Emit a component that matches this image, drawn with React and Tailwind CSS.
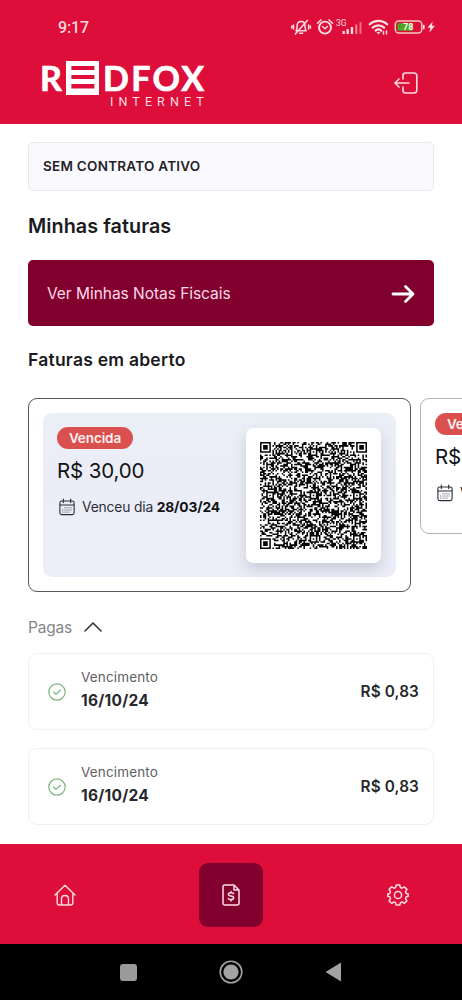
const QR_SIZE = 69;
const QR_MARKS = [6, 34, 62];

const isFinder = (x, y) => (x < 8 && y < 8) || (x > 60 && y < 8) || (x < 8 && y > 60);

const qrModule = (x, y) => {
  if (isFinder(x, y)) {
    const fx = x > 60 ? x - 62 : x;
    const fy = y > 60 ? y - 62 : y;
    if (fx < 0 || fy < 0 || fx > 6 || fy > 6) return false;
    return Math.max(Math.abs(fx - 3), Math.abs(fy - 3)) !== 2;
  }
  for (const cy of QR_MARKS) {
    for (const cx of QR_MARKS) {
      const d = Math.max(Math.abs(x - cx), Math.abs(y - cy));
      if (d <= 2 && !isFinder(cx, cy)) return d !== 1;
    }
  }
  if (x === 6 || y === 6) return (x + y) % 2 === 0;
  let h = (x * 374761393 + y * 668265263) | 0;
  h = Math.imul(h ^ (h >>> 13), 1274126177);
  return ((h ^ (h >>> 16)) & 255) < 134;
};

const buildQr = () => {
  let d = "";
  for (let y = 0; y < QR_SIZE; y++) {
    for (let x = 0; x < QR_SIZE; x++) {
      if (qrModule(x, y)) d += `M${x} ${y}h1v1h-1z`;
    }
  }
  return d;
};

const qrPath = buildQr();

const QrCode = () => (
  <svg viewBox={`0 0 ${QR_SIZE} ${QR_SIZE}`} className="h-[107px] w-[107px]">
    <path d={qrPath} fill="#050505" />
  </svg>
);

const CalendarIcon = () => (
  <svg viewBox="0 0 16 18" className="h-[18px] w-4 shrink-0" fill="none" stroke="#2b2d3a" strokeLinecap="round" strokeLinejoin="round">
    <rect x="0.9" y="3" width="14.2" height="13.6" rx="1.8" strokeWidth="1.1" />
    <path d="M1 7h14M4.3 1v3.6M11.7 1v3.6" strokeWidth="1.1" />
    <path d="M6 9.8h.1M8 9.8h.1M10 9.8h.1M12 9.8h.1M3.7 12h.1M6 12h.1M8 12h.1M10 12h.1M12 12h.1M3.7 14.1h.1M6 14.1h.1M8 14.1h.1M10 14.1h.1" strokeWidth="0.9" />
  </svg>
);

const CheckIcon = () => (
  <svg viewBox="0 0 18 18" className="h-[18px] w-[18px] shrink-0" fill="none" stroke="#7bb480" strokeWidth="1.2" strokeLinecap="round" strokeLinejoin="round">
    <circle cx="9" cy="9" r="8.2" />
    <path d="M5.7 9.2l2.3 2.2 4.3-4.2" />
  </svg>
);

const StatusBar = () => (
  <div className="flex h-[54px] items-center justify-between pr-[26px] pl-[58px]">
    <span className="pt-px font-[Roboto] text-base font-medium tracking-[-0.1px] text-[#ffd5da]">9:17</span>
    <svg viewBox="0 0 145 20" className="h-5 w-[145px]" fill="none" stroke="#ffe1e5" strokeWidth="1.5" strokeLinecap="round" strokeLinejoin="round">
      {/* muted bell */}
      <path d="M5 13.8c1.2-1.3 1-2.5 1.1-4.8 0-3 1.7-4.6 4-4.6s3.9 1.6 3.9 4.6c.1 2.3 0 3.5 1.2 4.8zM8.6 16.3h3M4.3 17L16.4 3.5M2.5 8v4M.8 9v2M17.6 8v4M19.4 9v2" />
      {/* alarm clock */}
      <circle cx="34" cy="10.6" r="6" strokeWidth="1.9" />
      <path d="M31.5 9.5L34 11.7l2.5-2.2M26.5 6.2L30 3M41.5 6.2L38 3" />
      {/* signal */}
      <text x="45" y="8.5" fontSize="8.5" fontFamily="Roboto" fill="#ffd5da" stroke="none">3G</text>
      <g stroke="none">
        <rect x="51.5" y="14" width="2.3" height="3" fill="#ffe1e5" />
        <rect x="55.5" y="12.2" width="2.3" height="4.8" fill="#ffe1e5" />
        <rect x="59.8" y="10" width="2.3" height="7" fill="#ffe1e5" />
        <rect x="64.3" y="7.5" width="2" height="9.5" fill="#f48095" />
        <rect x="68.5" y="5" width="2" height="12" fill="#f06c84" />
      </g>
      {/* wifi */}
      <path d="M78.7 7.3c5-4.6 12.5-4.6 17.4 0M81.6 10.6c3.3-3.1 8.400-3.100 11.600 0M84.600 13.600c1.700-1.600 4-1.600 5.600 0" strokeWidth="2.200" />
      <path d="M85.500 15h4l-2 2.400z" fill="#ffe1e5" stroke="none" />
      <path d="M92.500 14.500v2.500M95.500 14v3" />
      {/* battery */}
      <rect x="104.300" y="4" width="26.500" height="12" rx="3.400" stroke="#f5c6c0" strokeWidth="1.500" />
      <path d="M107.500 6.200h14v7.600h-14q-1 0-1-1V7.200q0-1 1-1z" fill="#4fa51d" stroke="none" />
      <text x="112" y="13.200" fontSize="9" fontWeight="700" fontFamily="Roboto" fill="#f4ffe8" stroke="none">78</text>
      <path d="M132.800 8.500v3" strokeWidth="1.700" />
      <path d="M141.700 4.500l-5.200 6.200h3l-1.200 5 5.600-6.900h-3z" fill="#ffe1e5" stroke="none" />
    </svg>
  </div>
);

const Logo = () => (
  <div className="w-[168px] font-[Lato] text-white">
    <div className="flex h-[34px] items-center">
      <span className="w-[26px] text-[34px] leading-[32px] font-bold [-webkit-text-stroke:0.7px_white]">R</span>
      <svg viewBox="0 0 33 34" className="mr-[4px] h-[34px] w-[33px]">
        <path fillRule="evenodd" fill="#fff" d="M0 0h33v34H0zM5.4 5h23v4H5.4zM5.4 14h23v4H5.4zM5.4 23h23v4.6H5.4z" />
      </svg>
      <span className="text-[34px] leading-[32px] font-bold tracking-[2.3px] [-webkit-text-stroke:0.7px_white]">DFOX</span>
    </div>
    <div className="pl-[70px] font-[Roboto] text-[12.5px] leading-[14px] tracking-[5.1px] whitespace-nowrap text-[#ffdce1]">INTERNET</div>
  </div>
);

const Header = () => (
  <header className="h-[123.5px] shrink-0 bg-[#dd0e39]">
    <StatusBar />
    <div className="flex items-start justify-between pt-[6.5px] pr-[43px] pl-[40px]">
      <Logo />
      <svg viewBox="0 0 25 24" className="mt-[10px] h-6 w-[25px]" fill="none" stroke="#ffdce1" strokeWidth="1.6" strokeLinecap="round" strokeLinejoin="round">
        <path d="M9 8V4.500Q9 2 11.500 2H20q2.800 0 2.800 2.800v14.400Q22.800 22 20 22h-8.500Q9 22 9 19.500V16M15 12H1.300M5 8l-4 4 4 4" />
      </svg>
    </div>
  </header>
);

const InvoiceInfo = () => (
  <div>
    <div className="flex h-[22px] w-[76px] items-center justify-center rounded-full bg-[#d9504f] text-[13.5px] font-semibold tracking-[-0.1px] text-[#fff0ef]">
      Vencida
    </div>
    <div className="mt-2 text-[20.5px] leading-7 tracking-[-0.15px] whitespace-nowrap text-[#111216]">R$ 30,00</div>
    <div className="mt-[11px] flex h-[22px] items-center gap-[7px] pl-[2px] text-[13.8px] tracking-[-0.15px] whitespace-nowrap text-[#2b2d3a]">
      <CalendarIcon />
      <span>
        Venceu dia <b className="font-bold text-[#111216]">28/03/24</b>
      </span>
    </div>
  </div>
);

const PaidCard = ({ date, value }) => (
  <div className="flex h-[77px] shrink-0 items-center rounded-[9px] border border-[#f0f0f1] pr-[14px] pl-[19px]">
    <CheckIcon />
    <div className="ml-[15px] flex-1 pb-[4px]">
      <div className="text-[13.5px] leading-5 tracking-[0.15px] text-[#5f5f62]">Vencimento</div>
      <div className="mt-[3px] text-[15.5px] leading-[22px] font-bold tracking-[0.25px] text-[#26282b]">{date}</div>
    </div>
    <div className="pt-px text-[15.3px] font-semibold tracking-[0.15px] text-[#26282b]">{value}</div>
  </div>
);

const BottomNav = () => (
  <nav className="grid h-[100px] shrink-0 grid-cols-[129px_204px_129px] place-items-center bg-[#dd0e39] pt-px">
    <svg viewBox="0 0 22 22" className="h-[22px] w-[22px]" fill="none" stroke="#ffdce1" strokeWidth="1.4" strokeLinecap="round" strokeLinejoin="round">
      <path d="M1 11L11 1.200 21 11M3.200 9.500v9.300q0 2.200 2.200 2.200h11.200q2.200 0 2.200-2.200V9.500M7.500 21v-6q0-3.500 3.500-3.500t3.500 3.500v6" />
    </svg>
    <div className="flex h-16 w-16 items-center justify-center rounded-[9px] bg-[#82002e]">
      <svg viewBox="0 0 18 22" className="h-[22px] w-[18px]" fill="none" stroke="#ffdce8" strokeWidth="1.5" strokeLinecap="round" strokeLinejoin="round">
        <path d="M3 1h9l5 5v13q0 2-2 2H3q-2 0-2-2V3q0-2 2-2zM12 1v5h5" />
        <path d="M11.600 9.500Q11 8.700 9 8.700c-3.400 0-3.500 3.300 0 3.300 3.600 0 3.500 3.600 0 3.600q-2.100 0-2.700-1M9 7.500v1.200M9 15.600v1.300" />
      </svg>
    </div>
    <svg viewBox="0 0 22 22" className="h-[22px] w-[22px]" fill="none" stroke="#ffdce1" strokeWidth="1.5" strokeLinejoin="round">
      <path d="M9.200 1h3.600l.6 2.500 1.700.7 2.300-1.300 2.500 2.500-1.400 2.200.7 1.800 2 .5v2.400l-2 .6-.7 1.700 1.400 2.300-2.500 2.400-2.300-1.300-1.700.7-.6 2.300H9.200l-.6-2.300-1.700-.7-2.300 1.300-2.500-2.400 1.400-2.300-.7-1.700-2-.6V9.900l2-.5.7-1.800-1.400-2.200 2.500-2.500 2.300 1.300 1.700-.7z" />
      <circle cx="11" cy="11" r="3.600" />
    </svg>
  </nav>
);

const SystemBar = () => (
  <div className="flex h-14 shrink-0 items-center justify-center gap-[82px] bg-black">
    <div className="h-[17px] w-[17px] rounded-[3px] bg-[#9a9a9a]" />
    <svg viewBox="0 0 24 24" className="h-6 w-6">
      <circle cx="12" cy="12" r="10.8" fill="none" stroke="#a3a3a3" strokeWidth="1.6" />
      <circle cx="12" cy="12" r="7.6" fill="#a3a3a3" />
    </svg>
    <svg viewBox="0 0 17 20" className="h-5 w-[17px]">
      <path d="M.5 10L16 .5v19z" fill="#a3a3a3" />
    </svg>
  </div>
);

const paid = [
  { id: 1, date: "16/10/24", value: "R$ 0,83" },
  { id: 2, date: "16/10/24", value: "R$ 0,83" },
];

const App = () => {
  return (
    <div className="flex h-[1000px] w-[462px] flex-col overflow-hidden bg-white font-[Inter,sans-serif]">
      <Header />

      <main className="flex h-[720.5px] shrink-0 flex-col overflow-hidden px-7 pt-[18.5px]">
        <div className="flex h-[49px] shrink-0 items-center rounded-[5px] border border-[#e9eaee] bg-[#faf9fd] px-[14px] text-[13.5px] font-semibold tracking-[0.25px] text-[#232327]">
          SEM CONTRATO ATIVO
        </div>

        <h1 className="mt-[21px] text-[19.8px] leading-7 font-semibold tracking-[0.05px] text-[#1b1b1f]">Minhas faturas</h1>

        <button className="mt-[20px] flex h-[66px] shrink-0 items-center justify-between rounded-[5px] bg-[#82002e] pt-px pr-[19px] pl-[19px] text-[15.5px] tracking-[-0.04px] text-[#ffd9e6]">
          <span>Ver Minhas Notas Fiscais</span>
          <svg viewBox="0 0 24 20" className="h-5 w-6" fill="none" stroke="#fff" strokeWidth="2.8" strokeLinecap="round" strokeLinejoin="round">
            <path d="M2 10h20M14.5 2.500L22 10l-7.500 7.500" />
          </svg>
        </button>

        <h2 className="mt-[21px] text-[17.5px] leading-[26px] font-semibold tracking-[0.24px] text-[#1b1b1f]">Faturas em aberto</h2>

        {/* Open invoices */}
        <div className="-mr-7 mt-[25px] flex h-[194px] shrink-0 items-start gap-[9px] overflow-hidden">
          <div className="h-[194px] w-[383px] shrink-0 rounded-[9px] border border-[#57575a] p-[14px]">
            <div className="flex h-full items-start justify-between rounded-[9px] bg-linear-to-b from-[#eaeef5] to-[#ecedf8] pt-[14px] pr-[15px] pl-[14px]">
              <InvoiceInfo />
              <div className="mt-px flex h-[135px] w-[135px] items-center justify-center rounded-[7px] bg-white shadow-[0_7px_14px_rgba(80,90,110,0.22)]">
                <QrCode />
              </div>
            </div>
          </div>
          <div className="h-[136px] w-[300px] shrink-0 rounded-[9px] border border-[#b5b5b8] p-[14px]">
            <InvoiceInfo />
          </div>
        </div>

        <div className="mt-[22px] flex h-[26px] shrink-0 items-center gap-[13px] text-[15.5px] tracking-[-0.2px] text-[#858588]">
          <span className="w-[43px] pt-px">Pagas</span>
          <svg viewBox="0 0 18 10" className="h-[10px] w-[18px]" fill="none" stroke="#333336" strokeWidth="1.6" strokeLinecap="round" strokeLinejoin="round">
            <path d="M1 9l8-8 8 8" />
          </svg>
        </div>

        <div className="mt-[13px] flex flex-col gap-[18px]">
          {paid.map((item) => (
            <PaidCard key={item.id} date={item.date} value={item.value} />
          ))}
        </div>
      </main>

      <BottomNav />
      <SystemBar />
    </div>
  );
};

export default App;
